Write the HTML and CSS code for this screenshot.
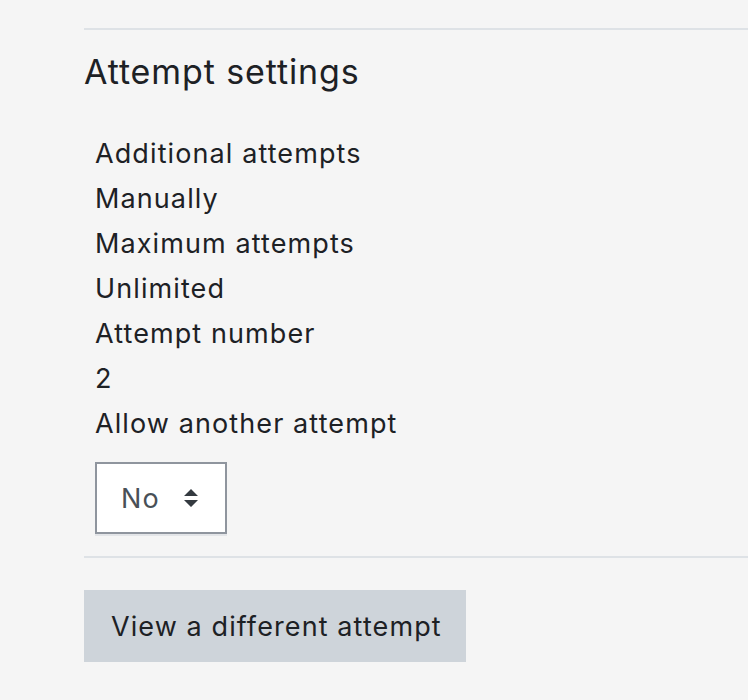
FILE: index.html
```html
<!DOCTYPE html>
<html>
<head>
<meta charset="utf-8">
<link rel="stylesheet" href="styles.css">
</head>
<body>
<div class="page">
  <section class="settings">
    <h3 class="heading">Attempt settings</h3>
    <div class="rows">
      <div class="row">Additional attempts</div>
      <div class="row">Manually</div>
      <div class="row">Maximum attempts</div>
      <div class="row">Unlimited</div>
      <div class="row">Attempt number</div>
      <div class="row">2</div>
      <div class="row">Allow another attempt</div>
      <div class="select">
        <span class="select-text">No</span>
        <svg class="select-arrows" width="14" height="20" viewBox="0 0 14 20"><path d="M7 1 L14 8 L0 8 Z M0 12 L14 12 L7 19 Z" fill="#343a40"/></svg>
      </div>
    </div>
  </section>
  <div class="actions">
    <button class="btn">View a different attempt</button>
  </div>
</div>
</body>
</html>
```
FILE: styles.css
```css
html, body {
  margin: 0;
  padding: 0;
  background: #f5f5f5;
}
body {
  font-family: "Inter", "Noto Sans", sans-serif;
  color: #1d2125;
}
.page {
  padding-left: 84px;
  padding-top: 28px;
}
.settings {
  border-top: 2px solid #dee2e6;
  border-bottom: 2px solid #dee2e6;
  padding-bottom: 22px;
}
.heading {
  margin: 0;
  padding-top: 20px;
  font-size: 34px;
  font-weight: 400;
  line-height: 44px;
  letter-spacing: 0.9px;
}
.rows {
  padding-left: 11px;
  padding-top: 37px;
  font-size: 27px;
  line-height: 45px;
  letter-spacing: 1.1px;
}
.select {
  margin-top: 16px;
  width: 128px;
  height: 68px;
  box-sizing: content-box;
  border: 2px solid #8f959e;
  background: #fff;
  display: flex;
  align-items: center;
  padding: 0;
  color: #495057;
  box-shadow: 0 2px 0 #e3e5e8;
}
.select-text {
  margin-left: 24px;
}
.select-arrows {
  margin-left: 24px;
}
.actions {
  padding-top: 32px;
}
.btn {
  font-family: inherit;
  font-size: 27px;
  letter-spacing: 1.1px;
  white-space: nowrap;
  color: #1d2125;
  background: #ced4da;
  border: 0;
  padding: 0 26px 0 27px;
  height: 72px;
  width: 382px;
  box-sizing: border-box;
  text-align: left;
  border-radius: 0;
}
```
